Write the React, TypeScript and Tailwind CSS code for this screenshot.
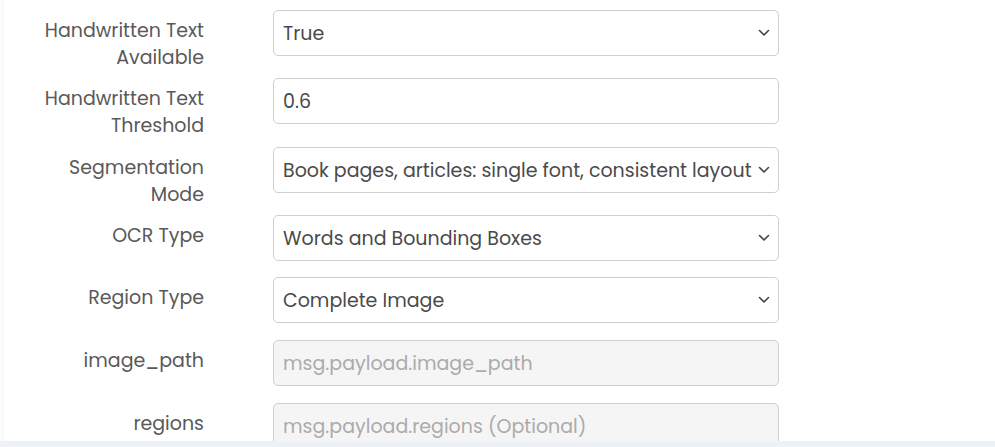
import React from "react";

type Field = {
  label: string[];
  value: string;
  kind: "select" | "input" | "disabled";
  rowHeight: string;
};

const fields: Field[] = [
  {
    label: ["Handwritten Text", "Available"],
    value: "True",
    kind: "select",
    rowHeight: "h-[68px]",
  },
  {
    label: ["Handwritten Text", "Threshold"],
    value: "0.6",
    kind: "input",
    rowHeight: "h-[69px]",
  },
  {
    label: ["Segmentation", "Mode"],
    value: "Book pages, articles: single font, consistent layout",
    kind: "select",
    rowHeight: "h-[68px]",
  },
  { label: ["OCR Type"], value: "Words and Bounding Boxes", kind: "select", rowHeight: "h-[62px]" },
  { label: ["Region Type"], value: "Complete Image", kind: "select", rowHeight: "h-[63px]" },
  { label: ["image_path"], value: "msg.payload.image_path", kind: "disabled", rowHeight: "h-[63px]" },
  { label: ["regions"], value: "msg.payload.regions (Optional)", kind: "disabled", rowHeight: "h-[63px]" },
];

const Chevron = () => (
  <svg width="12" height="8" viewBox="0 0 12 8" className="shrink-0 ml-[2px] -mt-[2px]">
    <polyline points="1.5,1.5 6,6 10.5,1.5" fill="none" stroke="#444" strokeWidth="1.6" strokeLinecap="round" strokeLinejoin="round" />
  </svg>
);

const Row: React.FC<{ field: Field }> = ({ field }) => {
  const boxBase = "w-[506px] h-[46px] rounded-[5px] border border-[#cfcfcf] flex items-center pl-[9px] pr-[8px] pt-[2px]";
  return (
    <div className={`flex items-start shrink-0 ${field.rowHeight}`}>
      <div className="w-[204px] pt-[7px] text-right text-[#595959] leading-[27px]">
        {field.label.map((line) => (
          <div key={line} className="whitespace-nowrap">
            {line}
          </div>
        ))}
      </div>
      <div className="ml-[69px]">
        {field.kind === "disabled" ? (
          <div className={`${boxBase} bg-[#f5f5f5] text-[#ababab]`}>
            <span className="whitespace-nowrap">{field.value}</span>
          </div>
        ) : (
          <div className={`${boxBase} bg-white text-[#4a4a4a]`}>
            <span className="whitespace-nowrap overflow-hidden flex-1">{field.value}</span>
            {field.kind === "select" && <Chevron />}
          </div>
        )}
      </div>
    </div>
  );
};

export default function App() {
  return (
    <div
      className="w-[995px] h-[447px] overflow-hidden bg-white relative flex flex-col text-[19px]"
      style={{ fontFamily: "Poppins, Inter, 'Noto Sans', sans-serif" }}
    >
      <div className="flex flex-1 min-h-0">
        <div className="w-[4px] shrink-0 border-r border-dotted border-[#f1f3f5] bg-[#fbfcfd]" />
        <div className="flex-1 flex flex-col -ml-[4px] -mt-[57px] overflow-hidden">
          <div className="flex items-start shrink-0 h-[67px]">
            <div className="w-[204px] text-right text-[#595959] leading-[27px] pt-[7px] pr-[14px]">
              <div className="whitespace-nowrap">Language</div>
            </div>
          </div>
          {fields.map((f) => (
            <Row key={f.label.join(" ")} field={f} />
          ))}
        </div>
      </div>
      <div className="h-[6px] shrink-0 bg-[#eef2f6]" />
    </div>
  );
}
